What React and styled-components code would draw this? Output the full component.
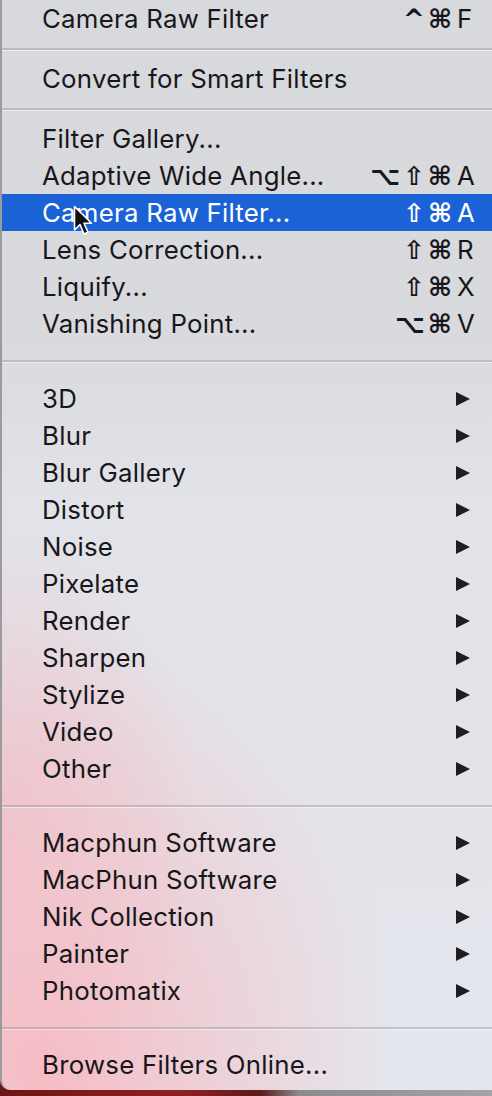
import React from 'react';
import styled, { createGlobalStyle } from 'styled-components';

const Global = createGlobalStyle`
  html, body {
    margin: 0;
    padding: 0;
    width: 492px;
    height: 1096px;
    overflow: hidden;
    background: linear-gradient(90deg, #6e1414 0px, #8e2222 180px, #5a1a1a 260px, #8c8c8e 300px, #a4a4a8 492px);
  }
  #root { height: 1096px; }
`;

const Menu = styled.div`
  position: relative;
  box-sizing: border-box;
  width: 492px;
  height: 1090px;
  border-left: 2px solid #9a9a9f;
  border-bottom-left-radius: 10px;
  overflow: hidden;
  font-family: Inter, "Liberation Sans", sans-serif;
  font-size: 25.8px;
  color: #17171b;
  background:
    radial-gradient(ellipse 360px 440px at 40px 1070px, rgba(247, 186, 194, 0.95), rgba(247, 186, 194, 0) 100%),
    radial-gradient(ellipse 200px 300px at 0px 820px, rgba(240, 190, 198, 0.7), rgba(240, 190, 198, 0) 100%),
    linear-gradient(180deg, #d8d9dd 0px, #d9dade 340px, #e2e3e8 500px, #e3e4ea 800px, #e4e7ee 1090px);
`;

const Row = styled.div`
  display: flex;
  align-items: center;
  height: 37px;
  padding: 0 18px 0 40px;
  background: ${p => (p.active ? '#1b62d6' : 'transparent')};
  color: ${p => (p.active ? '#ffffff' : 'inherit')};
`;

const Label = styled.span`
  flex: 1;
  white-space: nowrap;
  letter-spacing: 0.25px;
`;

const Keys = styled.span`
  display: flex;
  align-items: center;
  margin-right: -5px;
  font-family: "DejaVu Sans", Inter, sans-serif;
  font-size: 26px;
  font-weight: 600;
`;

const Mods = styled.span`
  letter-spacing: 3px;
`;

const Key = styled.span`
  width: 22px;
  margin-left: 2px;
  text-align: left;
  font-family: Inter, "Liberation Sans", sans-serif;
  font-size: 25.8px;
  font-weight: 400;
`;

const Sep = styled.div`
  display: flex;
  align-items: center;
  height: ${p => p.h}px;
  &::after {
    content: '';
    flex: 1;
    height: 2px;
    background: rgba(150, 150, 158, 0.45);
    box-shadow: 0 1px 0 rgba(255, 255, 255, 0.5);
  }
`;

const Arrow = styled.svg`
  width: 15px;
  height: 14px;
  margin-right: 4px;
`;

const Cursor = styled.svg`
  position: absolute;
  left: 71px;
  top: 205px;
  width: 22px;
  height: 32px;
`;

const sections = [
  { sep: 0, items: [{ label: 'Camera Raw Filter', mods: '^⌘', key: 'F' }] },
  { sep: 23, items: [{ label: 'Convert for Smart Filters' }] },
  {
    sep: 23,
    items: [
      { label: 'Filter Gallery...' },
      { label: 'Adaptive Wide Angle...', mods: '⌥⇧⌘', key: 'A' },
      { label: 'Camera Raw Filter...', mods: '⇧⌘', key: 'A', active: true },
      { label: 'Lens Correction...', mods: '⇧⌘', key: 'R' },
      { label: 'Liquify...', mods: '⇧⌘', key: 'X' },
      { label: 'Vanishing Point...', mods: '⌥⌘', key: 'V' },
    ],
  },
  {
    sep: 38,
    items: ['3D', 'Blur', 'Blur Gallery', 'Distort', 'Noise', 'Pixelate', 'Render', 'Sharpen', 'Stylize', 'Video', 'Other'].map(
      l => ({ label: l, sub: true })
    ),
  },
  {
    sep: 37,
    items: ['Macphun Software', 'MacPhun Software', 'Nik Collection', 'Painter', 'Photomatix'].map(l => ({ label: l, sub: true })),
  },
  { sep: 37, items: [{ label: 'Browse Filters Online...' }] },
];

function Item({ it }) {
  return (
    <Row active={it.active}>
      <Label>{it.label}</Label>
      {it.key && (
        <Keys>
          <Mods>{it.mods}</Mods>
          <Key>{it.key}</Key>
        </Keys>
      )}
      {it.sub && (
        <Arrow viewBox="0 0 15 14">
          <path d="M1 0 L15 7 L1 14 Z" fill="#1e1e22" />
        </Arrow>
      )}
    </Row>
  );
}

export default function App() {
  return (
    <>
      <Global />
      <Menu>
        {sections.map((s, i) => (
          <div key={i}>
            {s.sep > 0 && <Sep h={s.sep} />}
            {s.items.map(it => (
              <Item key={it.label} it={it} />
            ))}
          </div>
        ))}
        <Cursor viewBox="0 0 22 32">
          <path d="M1.5 1.5 L1.5 25 L7 19.5 L11 29 L15 27.3 L11 18.2 L18.5 18.2 Z" fill="#111" stroke="#fff" strokeWidth="1.6" strokeLinejoin="round" />
        </Cursor>
      </Menu>
    </>
  );
}
